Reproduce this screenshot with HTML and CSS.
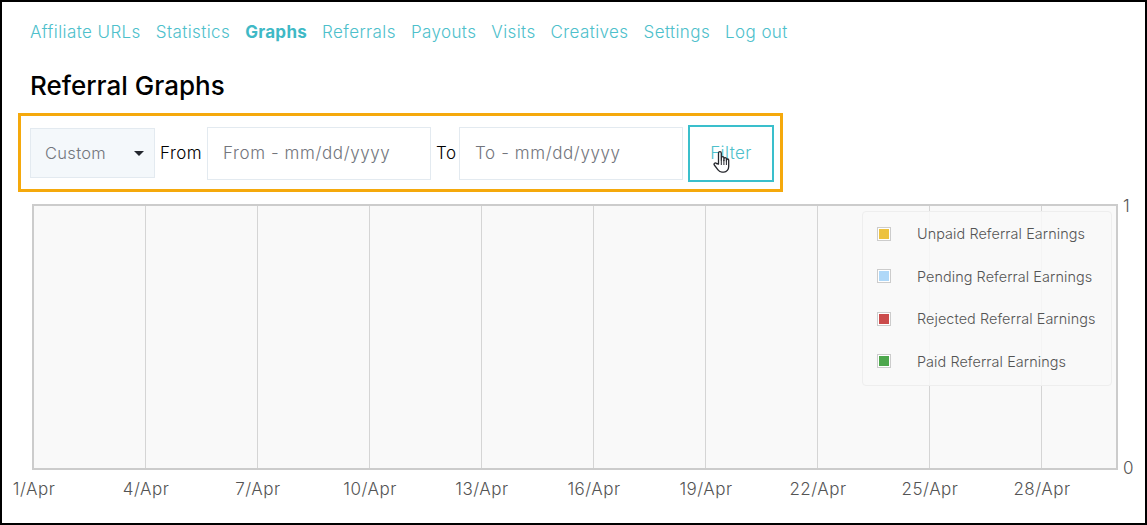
FILE: index.html
```html
<!DOCTYPE html>
<html lang="en">
<head>
<meta charset="utf-8">
<title>Referral Graphs</title>
<link rel="stylesheet" href="styles.css">
</head>
<body>
<div class="frame">
  <nav class="tabs">
    <a href="#">Affiliate URLs</a>
    <a href="#">Statistics</a>
    <a href="#" class="active">Graphs</a>
    <a href="#">Referrals</a>
    <a href="#">Payouts</a>
    <a href="#">Visits</a>
    <a href="#">Creatives</a>
    <a href="#">Settings</a>
    <a href="#">Log out</a>
  </nav>
  <h1 class="title">Referral Graphs</h1>
  <form class="filters">
    <div class="select"><span>Custom</span><i class="caret"></i></div>
    <label class="lbl lbl-from">From</label>
    <input class="date date-from" type="text" placeholder="From - mm/dd/yyyy">
    <label class="lbl lbl-to">To</label>
    <input class="date date-to" type="text" placeholder="To - mm/dd/yyyy">
    <div class="btn-wrap">
      <button class="btn" type="button">Filter</button>
      <svg class="hand" width="18" height="26" viewBox="0 0 18 26">
        <path d="M5.5 15V4.2c0-2 2.8-2 2.8 0V11l.1-2.2c0-1.7 2.5-1.7 2.5 0V11.5l.1-1.6c0-1.6 2.4-1.6 2.4 0v2l.1-.8c0-1.5 2.2-1.5 2.2 0v6.4c0 3-2 5.6-4.8 5.6H9c-2 0-3-.8-4-2.2L1.3 16c-.9-1.4.9-2.8 2.1-1.5z" fill="#fff" stroke="#26282e" stroke-width="1.3" stroke-linejoin="round"/>
        <path d="M8.3 11v5M10.9 11v5M13.4 12v4" stroke="#26282e" stroke-width="1" fill="none"/>
      </svg>
    </div>
  </form>
  <div class="chart">
    <div class="plot">
      <span class="cell"></span><span class="cell"></span><span class="cell"></span><span class="cell"></span><span class="cell"></span>
      <span class="cell"></span><span class="cell"></span><span class="cell"></span><span class="cell"></span><span class="cell"></span>
    </div>
    <span class="y y-top">1</span>
    <span class="y y-bottom">0</span>
    <div class="xaxis">
      <span>1/Apr</span><span>4/Apr</span><span>7/Apr</span><span>10/Apr</span><span>13/Apr</span>
      <span>16/Apr</span><span>19/Apr</span><span>22/Apr</span><span>25/Apr</span><span>28/Apr</span>
    </div>
    <ul class="legend">
      <li><i class="swatch"><b class="c-unpaid"></b></i>Unpaid Referral Earnings</li>
      <li><i class="swatch"><b class="c-pending"></b></i>Pending Referral Earnings</li>
      <li><i class="swatch"><b class="c-rejected"></b></i>Rejected Referral Earnings</li>
      <li><i class="swatch"><b class="c-paid"></b></i>Paid Referral Earnings</li>
    </ul>
  </div>
</div>
</body>
</html>
```
FILE: styles.css
```css
* { box-sizing: border-box; }
html, body { margin: 0; padding: 0; background: #fff; }
body { font-family: "Inter", "Liberation Sans", sans-serif; }
.frame {
  width: 1147px;
  height: 525px;
  border: 2px solid #000;
  padding: 18px 0 0 28px;
  overflow: hidden;
  position: relative;
}
.tabs { display: flex; gap: 15px; height: 24px; align-items: center; font-size: 17px; letter-spacing: 0.4px; }
.tabs a { color: #4dc0cb; text-decoration: none; font-weight: 350; }
.tabs a.active { font-weight: 700; color: #3fb9c6; letter-spacing: 0.3px; }
.title { margin: 26px 0 0; font-size: 26px; line-height: 32px; font-weight: 500; color: #000; }
.filters {
  margin: 11px 0 0 -12px;
  width: 765px;
  height: 79px;
  border: 3px solid #f5a90c;
  padding: 1px 0 0 9px;
  display: flex;
  align-items: center;
  font-size: 17px;
}
.select {
  width: 125px;
  height: 50px;
  background: #f4f8fb;
  border: 1px solid #e3eaf0;
  display: flex;
  align-items: center;
  justify-content: space-between;
  padding: 0 10px 0 14px;
  color: #72757c;
  font-weight: 300;
  font-size: 16.5px;
  letter-spacing: 0.3px;
}
.caret { width: 0; height: 0; border-left: 5px solid transparent; border-right: 5px solid transparent; border-top: 5px solid #23272e; }
.lbl { color: #000; font-weight: 350; letter-spacing: 0.5px; }
.lbl-from { margin-left: 5px; width: 47px; }
.lbl-to { margin-left: 5px; width: 23px; }
.date {
  height: 53px;
  background: #fff;
  border: 1px solid #e3eaf0;
  padding: 0 15px;
  font: 300 17px "Inter", "Liberation Sans", sans-serif;
  letter-spacing: 0.6px;
  color: #72757c;
  outline: none;
}
.date::placeholder { color: #72757c; opacity: 1; }
.date-from { width: 224px; }
.date-to { width: 224px; }
.btn-wrap { position: relative; margin-left: 5px; }
.btn {
  display: block;
  width: 86px;
  height: 57px;
  background: #fff;
  border: 2px solid #3abfcc;
  color: #4dc0cb;
  font: 350 17px "Inter", "Liberation Sans", sans-serif;
  letter-spacing: 0.4px;
  padding: 0;
}
.hand { position: absolute; left: 25px; top: 24px; }
.chart { position: absolute; left: 0; top: 0; width: 100%; height: 100%; pointer-events: none; }
.plot {
  position: absolute;
  left: 30px;
  top: 202px;
  width: 1086px;
  height: 266px;
  background: #f9f9f9;
  border: 2px solid #cccccc;
  display: flex;
}
.cell { flex: 0 0 112px; height: 100%; border-right: 1px solid #d5d5d5; }
.cell:last-child { flex: 1; border-right: 0; }
.y { position: absolute; left: 1121px; font-size: 17px; line-height: 18px; color: #545454; font-weight: 300; }
.y-top { top: 195px; }
.y-bottom { top: 457px; }
.xaxis {
  position: absolute;
  left: -24px;
  top: 477px;
  display: flex;
  font-size: 17px;
  line-height: 20px;
  color: #545454;
  font-weight: 300;
  letter-spacing: 0.5px;
}
.xaxis span { width: 112px; text-align: center; }
.legend {
  position: absolute;
  left: 860px;
  top: 209px;
  width: 250px;
  height: 175px;
  margin: 0;
  list-style: none;
  background: rgba(249, 249, 249, 0.85);
  border: 1px solid #eeeeee;
  border-radius: 4px;
  display: flex;
  flex-direction: column;
  justify-content: space-between;
  padding: 8px 0 10px 14px;
  font-size: 14.4px;
  font-weight: 300;
  letter-spacing: 0.08px;
  color: #545454;
}
.legend li { display: flex; align-items: center; height: 27px; }
.swatch { width: 14px; height: 14px; border: 1px solid #ccc; padding: 1px; margin-right: 26px; background: #fff; display: block; flex: none; }
.swatch b { display: block; width: 100%; height: 100%; }
.c-unpaid { background: #edc240; }
.c-pending { background: #afd8f8; }
.c-rejected { background: #cb4b4b; }
.c-paid { background: #4da74d; }
```
